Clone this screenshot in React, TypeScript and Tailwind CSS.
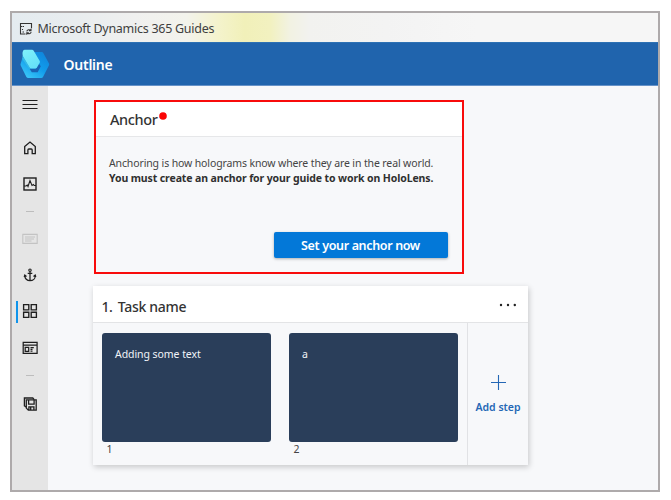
import type { ReactNode } from "react";

function Glyph({ children, className = "" }: { children: ReactNode; className?: string }) {
  return (
    <svg width="16" height="16" viewBox="0 0 16 16" fill="none" stroke="#1f1f1f" strokeWidth="1.1" className={`block shrink-0 ${className}`}>
      {children}
    </svg>
  );
}

function NavItem({ children, className = "" }: { children: ReactNode; className?: string }) {
  return <div className={`flex h-9 w-9 shrink-0 items-center justify-center ${className}`}>{children}</div>;
}

function Logo() {
  return (
    <svg width="30" height="32" viewBox="0 0 30 32" className="block shrink-0">
      <defs>
        <linearGradient id="ring" x1="0.9" y1="0.1" x2="0.2" y2="1">
          <stop offset="0" stopColor="#0f86dc" />
          <stop offset="0.5" stopColor="#129dec" />
          <stop offset="1" stopColor="#3cc8f8" />
        </linearGradient>
        <linearGradient id="lid" x1="0" y1="0" x2="0.6" y2="1">
          <stop offset="0" stopColor="#80f1fb" />
          <stop offset="1" stopColor="#66e0f8" />
        </linearGradient>
      </defs>
      <path d="M2.2 10.5L15 4h6.8q1 0 1.5 1L29 15.4q.4.9 0 1.8L23 29q-.5 1-1.6 1H8.2q-1.2 0-1.8-1.1L.7 17.4q-.4-.9 0-1.8z" fill="url(#ring)" />
      <path d="M9.4 20.4h6.4l3-4.8 2 2.6-3.1 6H11.8z" fill="#1a63b4" />
      <path d="M3.1 2.7q.5-1 1.6-1h7.3q1.1 0 1.7 1l6 10.4q.4.8 0 1.6l-2.9 5q-.5.8-1.5.8H11.5q-1.5 0-2.1-1.2L3.1 8.9Q2.5 7.2 2.5 5.2 2.5 4 3.1 2.7z" fill="url(#lid)" />
      <path d="M2.6 7.5l6.6 11.2q.6 1.4 2.2 1.9l-2.2.2L2.2 11z" fill="#35b9e9" />
    </svg>
  );
}

function Sidebar() {
  return (
    <nav className="flex w-9 shrink-0 flex-col bg-[#e5e5e5]">
      <NavItem>
        <Glyph><path d="M.5 4.5h15M.5 8.5h15M.5 12.5h15" strokeWidth="1" /></Glyph>
      </NavItem>
      <NavItem className="mt-2">
        <Glyph><path d="M2.7 6.5L8 2l5.3 4.5v7.2h-3.1V10q0-1-1-1H6.9q-1 0-1 1v3.7H2.7z" strokeWidth="1.3" /></Glyph>
      </NavItem>
      <NavItem>
        <Glyph><rect x="2" y="2" width="12" height="12" strokeWidth="1.4" /><path d="M2 10h2l1.3-1L6 10.5 8 4.5l2 5 1.4-1 .8 1H14" /></Glyph>
      </NavItem>
      <div className="mx-auto mt-[9px] h-px w-2 bg-[#bdbdbd]" />
      <NavItem className="mt-[9px]">
        <Glyph>
          <path d="M.8 3.4h14.4v9H.8z" stroke="#c3c3c3" />
          <path d="M3 6h10M3 8h9M3 10h6.5" stroke="#c3c3c3" />
        </Glyph>
      </NavItem>
      <NavItem>
        <Glyph><circle cx="8" cy="3.2" r="1.2" /><path d="M8 4.5v9.3M5.7 6.3h4.6M2.7 8.5c0 3 2.3 5.2 5.3 5.2s5.3-2.2 5.3-5.2M2.2 10l.6-1.9 1.7 1.3m9.3.6l-.6-1.9-1.7 1.3" strokeWidth="1.25" /></Glyph>
      </NavItem>
      <NavItem className="relative">
        <span className="absolute left-[3.5px] top-2 h-[22px] w-[2px] bg-[#1094eb]" />
        <Glyph><path d="M1.6 1.6h5.2v5.2H1.6zM9.2 1.6h5.2v5.2H9.2zM1.6 9.2h5.2v5.2H1.6zM9.2 9.2h5.2v5.2H9.2z" strokeWidth="1.35" /></Glyph>
      </NavItem>
      <NavItem className="mt-px">
        <Glyph><path d="M1.2 2.4h13.9v11H1.2zM1 5h14M3.2 7.3h3.5v4H3.2zM8.5 7.5h3.3M8.5 9.3h2M8.5 11.2h2" strokeWidth="1.25" /></Glyph>
      </NavItem>
      <div className="mx-auto mt-[9px] h-px w-2 bg-[#bdbdbd]" />
      <NavItem className="mt-[10px]">
        <Glyph>
          <path d="M4.3 3.9h9.9v10.2H6.3l-2-2zM6.6 3.9v4.2h5.5V3.9M6.9 14v-3.2h5V14M8.7 11.5V14" strokeWidth="1.3" />
          <path d="M4.3 11L2.4 9.8V2h8.4l1.4 1.6" strokeWidth="1.3" />
        </Glyph>
      </NavItem>
    </nav>
  );
}

function AnchorCard() {
  return (
    <section className="h-[174px] w-[370px] border-2 border-[#f80b0b] bg-[#f7f8fa]">
      <header className="flex h-[35px] items-start border-b border-[#e6e7e9] bg-white pl-[14px]">
        <h2 className="mt-[7px] text-[14.5px] font-medium leading-5 tracking-[-0.4px] text-[#333]">Anchor</h2>
        <svg width="8" height="8" viewBox="0 0 8 8" className="ml-[2px] mt-[9.5px]"><circle cx="4" cy="4" r="3.8" fill="#fa0505" /></svg>
      </header>
      <div className="flex flex-col pl-[13px] pr-[14.5px] pt-[19px] text-[10.5px] leading-[14.5px]">
        <p className="whitespace-nowrap tracking-[-0.125px] text-[#444]">Anchoring is how holograms know where they are in the real world.</p>
        <p className="whitespace-nowrap font-bold tracking-[-0.11px] text-[#303030]">You must create an anchor for your guide to work on HoloLens.</p>
        <button className="mt-[47px] h-[26px] w-[174px] self-end rounded-[2px] bg-[#0378d8] pt-[2px] text-[12.5px] font-semibold leading-[24px] tracking-[-0.35px] text-white shadow-[0_1px_3px_rgba(0,0,0,0.3)]">
          Set your anchor now
        </button>
      </div>
    </section>
  );
}

function Step({ index, label }: { index: number; label: string }) {
  return (
    <div className="w-[169px]">
      <div className="h-[109px] rounded-[3px] bg-[#2a3e5a] pl-[13px] pt-[14.5px] text-[10.5px] leading-[15px] tracking-[-0.06px] text-[#f1f4f8]">{label}</div>
      <div className="pl-[4.5px] text-[10.5px] leading-[15px] text-[#444]">{index}</div>
    </div>
  );
}

function TaskCard() {
  return (
    <section className="-ml-px mt-[12px] h-[179px] w-[435px] bg-[#f7f8fa] shadow-[1px_2px_6px_rgba(0,0,0,0.2)]">
      <header className="flex h-[37px] items-center border-b border-[#e3e4e6] bg-white pl-[8.5px] pr-[11px] text-[14px] font-medium text-[#333]">
        <span className="mt-[4px] tracking-[-0.5px]">1.</span>
        <h2 className="ml-[5.5px] mt-[4px] tracking-[-0.3px]">Task name</h2>
        <svg width="18" height="4" viewBox="0 0 18 4" className="ml-auto mt-px" fill="#222">
          <circle cx="2" cy="2" r="1.2" /><circle cx="9" cy="2" r="1.2" /><circle cx="15.8" cy="2" r="1.2" />
        </svg>
      </header>
      <div className="flex h-[142px]">
        <div className="flex w-[375px] gap-[18px] border-r border-[#e1e2e5] pl-[9px] pt-[9.5px]">
          <Step index={1} label="Adding some text" />
          <Step index={2} label="a" />
        </div>
        <button className="flex flex-1 flex-col items-center pt-[52px] text-[#2467b5]">
          <svg width="15" height="15" viewBox="0 0 15 15" stroke="currentColor" strokeWidth="1.1"><path d="M7.5 0v15M0 7.5h15" /></svg>
          <span className="mt-[10px] text-[10.5px] font-semibold leading-[15px]">Add step</span>
        </button>
      </div>
    </section>
  );
}

export default function App() {
  return (
    <div className="h-[500px] w-[671px] overflow-hidden bg-white pl-[10px] pt-[11px] font-['Noto_Sans','Open_Sans',sans-serif]">
      <div className="flex h-[481px] w-[650px] flex-col border-2 border-[#aeaaab] bg-[#f7f8fa]">
        <div className="flex h-[29px] shrink-0 items-center bg-[linear-gradient(90deg,#e4ebf0_0%,#e9edef_10%,#f0f0ef_19%,#f3f3ec_27%,#f4f3cc_32%,#f1f0b9_36%,#f2f1c0_40%,#f2f2e2_43%,#f2f2ef_46%,#f3f3f3_58%,#f6f6f6_72%,#f6f6f6_100%)] pl-[6px]">
          <Glyph className="mt-[2px]"><path d="M7.5 13H2.5V2.5h11v4.8M2.5 5.5h2M8.7 10.3c.5-1.6 3-2.2 4.1-.7M13 7.8v2h-2M13.2 11.2c-.5 1.6-3 2.2-4.1.7M8.8 13.7v-2h2M5 5.5h1M4.5 8v1M4.5 11h1.5" stroke="#333" /></Glyph>
          <h1 className="ml-[3.5px] mt-[4px] text-[12.5px] font-normal tracking-[-0.27px] text-[#404040]">Microsoft Dynamics 365 Guides</h1>
        </div>
        <header className="flex h-11 shrink-0 items-center border-b border-t border-b-[#6692c8] border-t-[#2d71b4] bg-[#2064ad] pl-2">
          <Logo />
          <span className="ml-[13.5px] text-[14px] font-semibold tracking-[-0.25px] text-white">Outline</span>
        </header>
        <div className="flex min-h-0 flex-1">
          <Sidebar />
          <main className="pl-[46px] pt-[14px]">
            <AnchorCard />
            <TaskCard />
          </main>
        </div>
      </div>
    </div>
  );
}
